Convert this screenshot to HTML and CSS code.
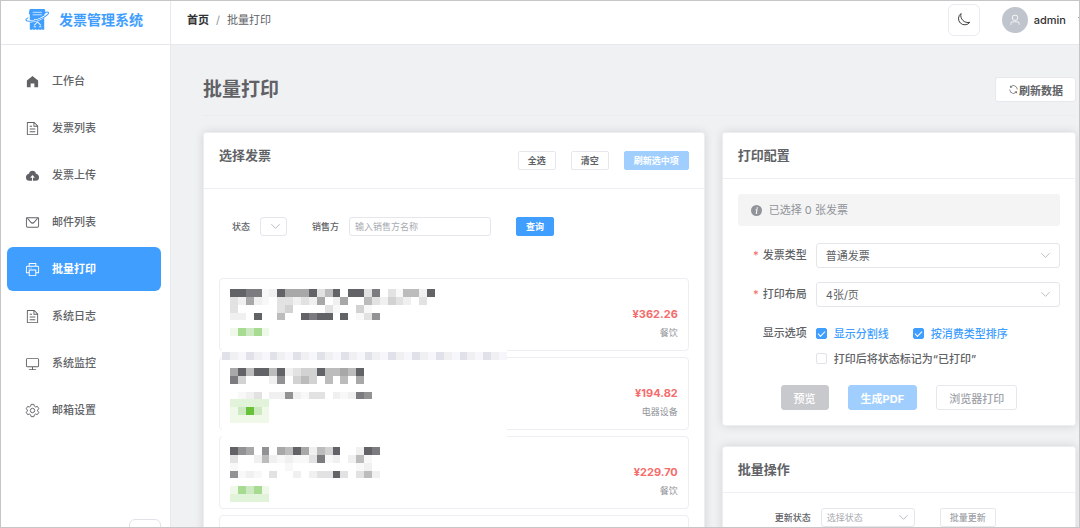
FILE: index.html
```html
<!DOCTYPE html>
<html lang="zh-CN">
<head>
  <meta charset="UTF-8" />
  <meta name="viewport" content="width=device-width, initial-scale=1.0" />
  <title>发票管理系统</title>
  <link rel="stylesheet" href="styles.css">
</head>
<body>
  <svg class="sprite" aria-hidden="true">
    <symbol id="i-doc" viewBox="0 0 1024 1024"><path d="M832 384H576V128H192v768h640zm-26.496-64L640 154.496V320zM160 64h480l256 256v608a32 32 0 0 1-32 32H160a32 32 0 0 1-32-32V96a32 32 0 0 1 32-32m160 448h384v64H320zm0-192h160v64H320zm0 384h384v64H320z"/></symbol>
    <symbol id="i-down" viewBox="0 0 12 12"><path d="M1.500 3.500 6 8l4.500-4.500" fill="none" stroke="currentColor" stroke-width="1"/></symbol>
  </svg>

  <div class="app">
    <!-- Menu latéral -->
    <aside class="sidebar">
      <div class="brand">
        <svg class="brand-logo" viewBox="0 0 26 24">
          <path d="M4.500 2q0-1.500 1.500-1.500h13.500Q21 .5 21 2v4h-1v15.500l-1.200 1-1.500-1-1.500 1-1.600-1-1.600 1-1.600-1-1.600 1-1.600-1-1.600 1-1.200-1V6h-1z" fill="#409eff"/>
          <path d="M8 4h9.500M8 6.600h9.500" stroke="#d9ecff" stroke-width=".9"/>
          <path d="M9 19h2.500M14.500 19H17M9.500 17.500 13 14l3.500 3.500M9.500 11l2 2" stroke="#d9ecff" stroke-width="1.200" fill="none"/>
          <path d="M3 9Q-1 12 2.500 13 11 14.500 20 8.500" stroke="#fff" stroke-width="2.400" fill="none"/>
          <path d="M3.500 9.500Q-1 12 2.500 13 10 14.500 20 9q6-4 4-5-1-.6-3.500.5" stroke="#409eff" stroke-width="1.100" fill="none"/>
        </svg>
        <span>发票管理系统</span>
      </div>
      <nav class="menu">
        <a href="#" class="menu-item"><svg class="icon" viewBox="0 0 1024 1024"><path d="M512 128 128 447.936V896h255.936V640H640v256h255.936V447.936z"/></svg>工作台</a>
        <a href="#" class="menu-item"><svg class="icon"><use href="#i-doc"/></svg>发票列表</a>
        <a href="#" class="menu-item"><svg class="icon" viewBox="0 0 1024 1024"><path d="M544 864V672h128L512 480 352 672h128v192H320v-1.600c-5.376.32-10.496 1.600-16 1.600A240 240 0 0 1 64 624c0-123.136 93.120-223.488 212.608-237.248A239.808 239.808 0 0 1 512 192a239.872 239.872 0 0 1 235.456 194.752c119.488 13.760 212.480 114.112 212.480 237.248a240 240 0 0 1-240 240c-5.376 0-10.560-1.280-16-1.600v1.600z"/></svg>发票上传</a>
        <a href="#" class="menu-item"><svg class="icon" viewBox="0 0 1024 1024"><path d="M128 224v512a64 64 0 0 0 64 64h640a64 64 0 0 0 64-64V224zm0-64h768a64 64 0 0 1 64 64v512a128 128 0 0 1-128 128H192A128 128 0 0 1 64 736V224a64 64 0 0 1 64-64"/><path d="M904 224 656.512 506.880a192 192 0 0 1-289.024 0L120 224zm-698.944 0 210.560 240.704a128 128 0 0 0 192.704 0L818.944 224z"/></svg>邮件列表</a>
        <a href="#" class="menu-item active"><svg class="icon" viewBox="0 0 1024 1024"><path d="M256 768H105.024c-14.272 0-19.456-1.472-24.640-4.288a29.056 29.056 0 0 1-12.160-12.096C65.536 746.432 64 741.248 64 727.040V379.072c0-42.816 4.480-58.304 12.800-73.984 8.384-15.616 20.672-27.904 36.288-36.288 15.680-8.320 31.168-12.800 73.984-12.800H256V64h512v192h68.928c42.816 0 58.304 4.480 73.984 12.800 15.616 8.384 27.904 20.672 36.288 36.288 8.320 15.680 12.800 31.168 12.800 73.984v347.904c0 14.272-1.472 19.456-4.288 24.640a29.056 29.056 0 0 1-12.096 12.160c-5.184 2.752-10.368 4.288-24.640 4.288H768v192H256zm64-192v320h384V576zm-64 128V512h512v192h128V379.072c0-29.376-1.408-36.480-5.248-43.776a23.296 23.296 0 0 0-10.048-10.048c-7.232-3.840-14.400-5.248-43.776-5.248H187.072c-29.376 0-36.480 1.408-43.776 5.248a23.296 23.296 0 0 0-10.048 10.048c-3.840 7.232-5.248 14.400-5.248 43.776V704zm64-448h384V128H320zm-64 128h64v64h-64zm128 0h64v64h-64z"/></svg>批量打印</a>
        <a href="#" class="menu-item"><svg class="icon"><use href="#i-doc"/></svg>系统日志</a>
        <a href="#" class="menu-item"><svg class="icon" viewBox="0 0 1024 1024"><path d="M544 768v128h192a32 32 0 1 1 0 64H288a32 32 0 1 1 0-64h192V768H192A128 128 0 0 1 64 640V256a128 128 0 0 1 128-128h640a128 128 0 0 1 128 128v384a128 128 0 0 1-128 128zM192 192a64 64 0 0 0-64 64v384a64 64 0 0 0 64 64h640a64 64 0 0 0 64-64V256a64 64 0 0 0-64-64z"/></svg>系统监控</a>
        <a href="#" class="menu-item"><svg class="icon line" viewBox="0 0 24 24"><path d="M9.800 2.200h4.400l.8 2.900 2 1.200 2.900-.8 2.200 3.700-2 2.100v1.400l2 2.100-2.200 3.700-2.900-.8-2 1.200-.8 2.900H9.800L9 18.900l-2-1.200-2.900.8-2.200-3.700 2-2.100v-1.400l-2-2.100 2.200-3.700 2.900.8L9 5.100z"/><circle cx="12" cy="12" r="3.500"/></svg>邮箱设置</a>
      </nav>
      <button type="button" class="collapse-btn" aria-label="收起"></button>
    </aside>

    <div class="main">
      <header class="topbar">
        <div class="breadcrumb"><a href="#">首页</a><i>/</i><span>批量打印</span></div>
        <div class="user-area">
          <button type="button" class="theme-btn" aria-label="主题"><svg class="line" viewBox="0 0 24 24"><path d="M8 2.500A10 10 0 1 0 22 16.500 11.500 11.500 0 0 1 8 2.500z"/></svg></button>
          <span class="avatar"><svg viewBox="0 0 1024 1024"><path d="M512 512a192 192 0 1 0 0-384 192 192 0 0 0 0 384m0 64a256 256 0 1 1 0-512 256 256 0 0 1 0 512m320 320v-96a96 96 0 0 0-96-96H288a96 96 0 0 0-96 96v96a32 32 0 1 1-64 0v-96a160 160 0 0 1 160-160h448a160 160 0 0 1 160 160v96a32 32 0 1 1-64 0"/></svg></span>
          <span class="username">admin</span>
          <svg class="chevron"><use href="#i-down"/></svg>
        </div>
      </header>

      <main class="page">
        <div class="page-head">
          <h1>批量打印</h1>
          <button type="button" class="btn strong"><svg class="btn-icon" viewBox="0 0 1024 1024"><path d="M771.776 794.880A384 384 0 0 1 128 512h64a320 320 0 0 0 555.712 216.448H654.720a32 32 0 1 1 0-64h149.056a32 32 0 0 1 32 32v148.928a32 32 0 1 1-64 0v-50.560zM276.288 295.616h92.992a32 32 0 0 1 0 64H220.160a32 32 0 0 1-32-32V178.560a32 32 0 0 1 64 0v50.560A384 384 0 0 1 896.128 512h-64a320 320 0 0 0-555.776-216.384z"/></svg>刷新数据</button>
        </div>

        <div class="columns">
          <!-- Choix des factures -->
          <section class="card">
            <div class="card-head">
              <h2>选择发票</h2>
              <div class="actions">
                <button type="button" class="btn small strong">全选</button>
                <button type="button" class="btn small strong">清空</button>
                <button type="button" class="btn small primary" disabled>刷新选中项</button>
              </div>
            </div>
            <div class="card-body">
              <form class="filters">
                <label for="status">状态</label>
                <span class="select small tiny"><select id="status"><option></option></select><svg class="chevron"><use href="#i-down"/></svg></span>
                <label for="seller">销售方</label>
                <input type="text" id="seller" placeholder="输入销售方名称">
                <button type="button" class="btn small primary">查询</button>
              </form>
              <div class="invoice-list">
                <div class="invoice">
                  <svg class="mosaic"></svg>
                  <div class="amount"><b>¥362.26</b><span>餐饮</span></div>
                  <svg class="seam striped"></svg>
                </div>
                <div class="invoice">
                  <svg class="mosaic"></svg>
                  <div class="amount"><b>¥194.82</b><span>电器设备</span></div>
                  <svg class="seam"></svg>
                </div>
                <div class="invoice">
                  <svg class="mosaic"></svg>
                  <div class="amount"><b>¥229.70</b><span>餐饮</span></div>
                </div>
                <div class="invoice"></div>
              </div>
            </div>
          </section>

          <div class="side">
            <!-- Configuration -->
            <section class="card">
              <div class="card-head"><h2>打印配置</h2></div>
              <div class="card-body">
                <div class="alert"><svg viewBox="0 0 24 24"><circle cx="12" cy="12" r="12"/><circle cx="13.500" cy="6.500" r="1.700" fill="#fff"/><path d="M10 10.500h3L11.500 18h2" fill="none" stroke="#fff" stroke-width="2.200"/></svg>已选择 0 张发票</div>
                <form class="config">
                  <label for="type" class="required">发票类型</label>
                  <span class="select"><select id="type"><option>普通发票</option></select><svg class="chevron"><use href="#i-down"/></svg></span>
                  <label for="layout" class="required">打印布局</label>
                  <span class="select"><select id="layout"><option>4张/页</option></select><svg class="chevron"><use href="#i-down"/></svg></span>
                  <span class="form-label">显示选项</span>
                  <div class="checks">
                    <label><input type="checkbox" checked><span>显示分割线</span></label>
                    <label><input type="checkbox" checked><span>按消费类型排序</span></label>
                    <label><input type="checkbox"><span>打印后将状态标记为“已打印”</span></label>
                  </div>
                </form>
                <div class="print-actions">
                  <button type="button" class="btn info" disabled>预览</button>
                  <button type="button" class="btn primary" disabled>生成PDF</button>
                  <button type="button" class="btn" disabled>浏览器打印</button>
                </div>
              </div>
            </section>

            <section class="card">
              <div class="card-head"><h2>批量操作</h2></div>
              <div class="card-body">
                <form class="batch">
                  <label for="newStatus">更新状态</label>
                  <span class="select small empty"><select id="newStatus"><option>选择状态</option></select><svg class="chevron"><use href="#i-down"/></svg></span>
                  <button type="button" class="btn small" disabled>批量更新</button>
                </form>
              </div>
            </section>
          </div>
        </div>
      </main>
    </div>
  </div>
  <script src="mosaic.js"></script>
</body>
</html>
```
FILE: styles.css
```css
* {
  box-sizing: border-box;
}

body {
  margin: 0;
  font-family: Inter, "Noto Sans CJK SC", sans-serif;
  font-size: 11px;
  line-height: 16px;
  color: #606266;
}

h1, h2 {
  margin: 0;
}

a {
  color: inherit;
  text-decoration: none;
}

button, input, select {
  font-family: inherit;
  font-size: inherit;
  color: inherit;
}

svg {
  fill: currentColor;
  flex-shrink: 0;
}

svg.line {
  fill: none;
  stroke: currentColor;
  stroke-width: 1.5;
  stroke-linejoin: round;
}

.sprite {
  display: none;
}

.app {
  display: flex;
  height: 100vh;
  border: 1px solid #c6c6c6;
  overflow: hidden;
}

/* Menu */
.sidebar {
  width: 170px;
  flex-shrink: 0;
  border-right: 1px solid #e6e8ed;
  background: #fff;
}

.brand {
  display: flex;
  align-items: center;
  gap: 9px;
  height: 44px;
  padding: 0 0 6px 24px;
  border-bottom: 1px solid #e6e8ed;
  color: #409eff;
  font-size: 14px;
  font-weight: bold;
}

.brand-logo {
  width: 25px;
  height: 24px;
}

.menu {
  display: flex;
  flex-direction: column;
  gap: 3px;
  padding: 14px 9px 0 6px;
}

.menu-item {
  display: flex;
  align-items: center;
  gap: 12px;
  height: 44px;
  padding-left: 18px;
  border-radius: 6px;
  font-weight: 500;
}

.menu-item.active {
  background: #409eff;
  color: #fff;
  font-weight: bold;
}

.icon {
  width: 15px;
  height: 15px;
}

.collapse-btn {
  display: block;
  width: 32px;
  height: 32px;
  margin: 87px 9px 0 auto;
  background: #fff;
  border: 1px solid #e1e3e9;
  border-radius: 6px;
}

/* Barre du haut */
.main {
  flex: 1;
  min-width: 0;
  overflow: hidden;
  background: #f0f1f3;
}

.topbar {
  display: flex;
  justify-content: space-between;
  align-items: center;
  height: 44px;
  padding: 0 0 6px 16px;
  background: #fff;
  border-bottom: 1px solid #e6e8ed;
}

.breadcrumb {
  display: flex;
  gap: 7px;
}

.breadcrumb a {
  color: #303133;
  font-weight: bold;
}

.breadcrumb i {
  font-style: normal;
  color: #909399;
}

.user-area {
  display: flex;
  align-items: center;
  margin-right: -9px;
}

.theme-btn {
  display: flex;
  align-items: center;
  justify-content: center;
  width: 32px;
  height: 32px;
  padding: 0;
  margin-right: 22px;
  background: #fff;
  border: 1px solid #e9ebf0;
  border-radius: 6px;
  color: #303133;
}

.theme-btn svg {
  width: 15px;
  height: 15px;
}

.avatar {
  display: flex;
  align-items: center;
  justify-content: center;
  width: 26px;
  height: 26px;
  border-radius: 50%;
  background: #c0c4cc;
  color: #fff;
}

.avatar svg {
  width: 12px;
  height: 12px;
}

.username {
  margin: 0 11px 0 6px;
  color: #303133;
  font-weight: 500;
}

.chevron {
  width: 11px;
  height: 11px;
  color: #b4b7be;
}

.user-area .chevron {
  color: #606266;
}

/* Page */
.page {
  padding: 32px 3px 0 32px;
}

.page-head {
  display: flex;
  align-items: center;
  justify-content: space-between;
  padding-bottom: 13px;
  margin-bottom: 16px;
  border-bottom: 1px solid #ebedf0;
}

h1 {
  font-size: 19px;
  line-height: 25px;
}

h2 {
  font-size: 13px;
  line-height: 16px;
}

.columns {
  display: grid;
  grid-template-columns: 17fr 12fr;
  gap: 17px;
  align-items: start;
}

.side {
  display: grid;
  gap: 20px;
}

.card {
  background: #fff;
  border: 1px solid #eceef2;
  border-radius: 3px;
  box-shadow: 0 0 10px rgba(0, 0, 0, 0.12);
}

.card-head {
  display: flex;
  justify-content: space-between;
  padding: 14px 15px 15px;
  border-bottom: 1px solid #ebeef5;
}

.card-body {
  padding: 15px;
}

.actions {
  display: flex;
  align-items: center;
  gap: 15px;
  height: 26px;
}

.btn {
  display: inline-flex;
  align-items: center;
  justify-content: center;
  height: 25px;
  padding: 0 12px;
  background: #fff;
  border: 1px solid #e6e8ed;
  border-radius: 3px;
  font-weight: 500;
  white-space: nowrap;
}

.btn.strong {
  font-weight: bold;
}

.btn:disabled {
  color: #a0a3a9;
}

.btn.small {
  height: 19px;
  padding: 0 9px;
  border-radius: 2px;
  font-size: 9px;
}

.btn.primary {
  background: #409eff;
  border-color: #409eff;
  color: #fff;
  font-weight: bold;
}

.btn.primary:disabled {
  background: #a0cfff;
  border-color: #a0cfff;
}

.btn.info {
  background: #c8c9cc;
  border-color: #c8c9cc;
  color: #fff;
}

.btn-icon {
  width: 11px;
  height: 11px;
}

.select {
  position: relative;
  display: block;
}

.select select {
  display: block;
  appearance: none;
  width: 100%;
  height: 25px;
  padding: 0 9px;
  background: #fff;
  border: 1px solid #e4e6ec;
  border-radius: 3px;
}

.select .chevron {
  position: absolute;
  right: 9px;
  top: 7px;
  pointer-events: none;
}

.select.small select {
  height: 19px;
  padding: 0 5px;
}

.select.small .chevron {
  right: 6px;
  top: 4px;
}

.select.tiny {
  width: 27px;
  margin-right: 15px;
}

.select.empty {
  width: 94px;
  margin-right: 15px;
  color: #a8abb2;
}

/* Filtres */
.filters, .batch {
  display: flex;
  align-items: center;
  gap: 10px;
  font-size: 9px;
  font-weight: 500;
}

.filters {
  padding: 13px 13px 42px;
}

.filters input {
  width: 142px;
  height: 19px;
  margin-right: 15px;
  padding: 0 5px;
  border: 1px solid #e4e6ec;
  border-radius: 3px;
}

.filters input::placeholder {
  color: #a8abb2;
}

.batch {
  padding-left: 37px;
}

/* Liste des factures */
.invoice-list {
  display: grid;
  gap: 6px;
}

.invoice {
  position: relative;
  display: flex;
  justify-content: space-between;
  align-items: flex-start;
  height: 73px;
  padding: 10px 10px 0;
  border: 1px solid #eceef2;
  border-radius: 4px;
}

.mosaic {
  width: 205px;
  height: 55px;
}

.amount {
  display: flex;
  flex-direction: column;
  align-items: flex-end;
  gap: 3px;
  padding-top: 17px;
}

.amount b {
  color: #f56c6c;
}

.amount span {
  color: #909399;
  font-size: 9px;
}

/* bande floutée entre deux factures */
.seam {
  position: absolute;
  left: 2px;
  bottom: -10px;
  z-index: 1;
  width: 285px;
  height: 12px;
  background: #fff;
}

/* Configuration */
.alert {
  display: flex;
  align-items: center;
  gap: 7px;
  height: 32px;
  padding: 0 13px;
  background: #f4f4f5;
  border-radius: 3px;
  color: #909399;
}

.alert svg {
  width: 11px;
  height: 11px;
}

.config {
  display: grid;
  grid-template-columns: 69px 1fr;
  gap: 14px 9px;
  padding: 17px 0 14px;
}

.config > label, .form-label {
  line-height: 25px;
  text-align: right;
  font-weight: 500;
}

.required::before {
  content: "*";
  margin-right: 4px;
  color: #f56c6c;
}

.checks {
  display: flex;
  flex-wrap: wrap;
  column-gap: 24px;
}

.checks label {
  display: flex;
  align-items: center;
  gap: 7px;
  height: 25px;
  font-weight: 500;
}

.checks input {
  appearance: none;
  width: 11px;
  height: 11px;
  margin: 0;
  background: #fff;
  border: 1px solid #e1e3e9;
  border-radius: 2px;
}

.checks input:checked {
  display: grid;
  place-items: center;
  background: #409eff;
  border-color: #409eff;
}

.checks input:checked::after {
  content: "";
  width: 6px;
  height: 3px;
  margin-bottom: 2px;
  border-left: 1px solid #fff;
  border-bottom: 1px solid #fff;
  transform: rotate(-45deg);
}

.checks input:checked + span {
  color: #409eff;
}

.print-actions {
  display: flex;
  justify-content: center;
  gap: 19px;
}
```
FILE: mosaic.js
```js
// un caractère = une case, "." = case vide
const colors = {
  1: "#f8f8f8", 2: "#f0f0f0", 3: "#e2e2e2", 4: "#d2d2d2", 5: "#bcbcbc",
  6: "#a8a8a8", 7: "#929294", 8: "#7c7c80", 9: "#626367",
  a: "#f0f8ea", b: "#e1f3d8", c: "#cde9c1", d: "#a8db92", e: "#67c23a",
  x: "#e1e1e9", y: "#f0f0f2", z: "#f6f6fb"
};

const invoices = [
  [
    "99881296669359.9938.315529",
    "32621.332326.26..532432.3.",
    "3.....34....31..41",
    "22.9..5..9899.9.137",
    "",
    "adcda",
    ""
  ],
  [
    "69599592344955659",
    "84...27.454.5.5.6",
    "",
    ".123.2272133.21287",
    "bbbbb",
    "aceca",
    "aaaaa"
  ],
  [
    "976.7.65962549..298",
    "3..25212113812.251",
    "1......1........12",
    "7121.3..2.23393.352",
    "",
    "adcda",
    "bbbbb"
  ]
];

function draw(svg, rows, cols) {
  svg.setAttribute("viewBox", `0 0 ${cols} ${rows.length}`);
  svg.setAttribute("preserveAspectRatio", "none");
  svg.setAttribute("shape-rendering", "crispEdges");
  rows.forEach((row, y) => {
    [...row].forEach((c, x) => {
      if (!colors[c]) return;
      const rect = document.createElementNS("http://www.w3.org/2000/svg", "rect");
      rect.setAttribute("x", x);
      rect.setAttribute("y", y);
      rect.setAttribute("width", 1);
      rect.setAttribute("height", 1);
      rect.setAttribute("fill", colors[c]);
      svg.appendChild(rect);
    });
  });
}

document.querySelectorAll(".mosaic").forEach((svg, i) => draw(svg, invoices[i], 26));

// 12px de haut : un tiers blanc, deux tiers de motif
const stripe = "xyz".repeat(12);
draw(document.querySelector(".seam.striped"), ["", stripe, stripe], 36);
```
